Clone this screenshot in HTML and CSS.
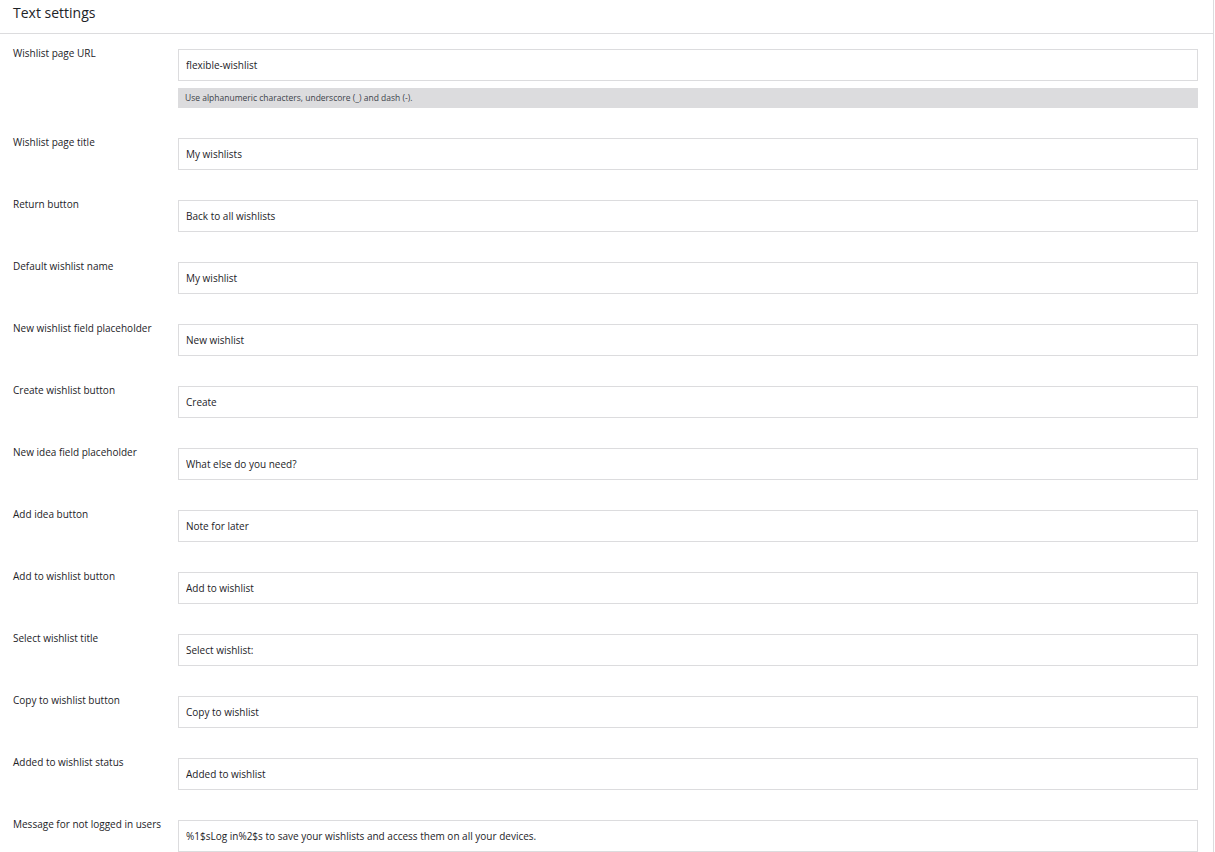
FILE: index.html
```html
<!DOCTYPE html>
<html>
<head>
<meta charset="utf-8">
<link rel="stylesheet" href="styles.css">
</head>
<body>
<div class="panel">
  <div class="panel-head">Text settings</div>
  <div class="rows">
    <div class="row">
      <label class="label">Wishlist page URL</label>
      <div class="field">
        <input class="input" type="text" value="flexible-wishlist">
        <div class="desc">Use alphanumeric characters, underscore (_) and dash (-).</div>
      </div>
    </div>
    <div class="row"><label class="label">Wishlist page title</label><div class="field"><input class="input" type="text" value="My wishlists"></div></div>
    <div class="row"><label class="label">Return button</label><div class="field"><input class="input" type="text" value="Back to all wishlists"></div></div>
    <div class="row"><label class="label">Default wishlist name</label><div class="field"><input class="input" type="text" value="My wishlist"></div></div>
    <div class="row"><label class="label">New wishlist field placeholder</label><div class="field"><input class="input" type="text" value="New wishlist"></div></div>
    <div class="row"><label class="label">Create wishlist button</label><div class="field"><input class="input" type="text" value="Create"></div></div>
    <div class="row"><label class="label">New idea field placeholder</label><div class="field"><input class="input" type="text" value="What else do you need?"></div></div>
    <div class="row"><label class="label">Add idea button</label><div class="field"><input class="input" type="text" value="Note for later"></div></div>
    <div class="row"><label class="label">Add to wishlist button</label><div class="field"><input class="input" type="text" value="Add to wishlist"></div></div>
    <div class="row"><label class="label">Select wishlist title</label><div class="field"><input class="input" type="text" value="Select wishlist:"></div></div>
    <div class="row"><label class="label">Copy to wishlist button</label><div class="field"><input class="input" type="text" value="Copy to wishlist"></div></div>
    <div class="row"><label class="label">Added to wishlist status</label><div class="field"><input class="input" type="text" value="Added to wishlist"></div></div>
    <div class="row"><label class="label">Message for not logged in users</label><div class="field"><input class="input" type="text" value="%1$sLog in%2$s to save your wishlists and access them on all your devices."></div></div>
  </div>
</div>
</body>
</html>
```

FILE: styles.css
```css
html, body {
  margin: 0;
  padding: 0;
  background: #fff;
  overflow: hidden;
}
body {
  font-family: "Open Sans", "Noto Sans", sans-serif;
  color: #1d2327;
}
.panel {
  width: 1214px;
  border-right: 1px solid #dcdcde;
  min-height: 852px;
  box-sizing: border-box;
}
.panel-head {
  height: 34px;
  box-sizing: border-box;
  padding: 3px 13px 0;
  font-size: 14px;
  line-height: 20px;
  color: #1d2327;
  border-bottom: 1px solid #dcdcde;
}
.rows {
  padding-top: 15px;
}
.row {
  display: flex;
  padding-bottom: 30px;
}
.label {
  width: 165px;
  padding-left: 13px;
  font-size: 10px;
  line-height: 14px;
  margin-top: -3px;
}
.field {
  width: 1020px;
  display: flex;
  flex-direction: column;
}
.input {
  box-sizing: border-box;
  width: 1020px;
  height: 32px;
  margin: 0;
  border: 1px solid #dcdcde;
  border-radius: 0;
  padding: 0 7px;
  font-family: "Open Sans", "Noto Sans", sans-serif;
  font-size: 10px;
  color: #1d2327;
  background: #fff;
  outline: none;
}
.desc {
  margin-top: 7px;
  height: 20px;
  background: #dcdcde;
  padding: 0 7px;
  font-size: 8.5px;
  line-height: 20px;
  color: #3c434a;
}
```
